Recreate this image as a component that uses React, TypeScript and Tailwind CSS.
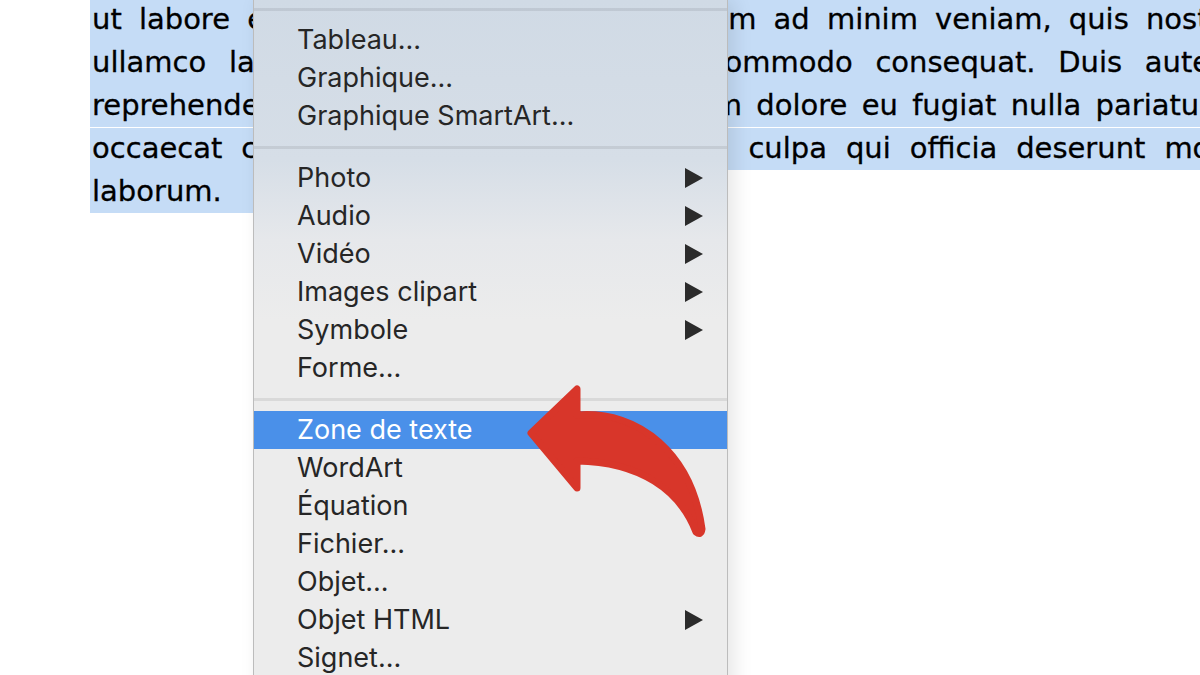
const lines = [
  "ut labore et dolore magna aliqua. Ut enim ad minim veniam, quis nostrud exercitation",
  "ullamco laboris nisi ut aliquip ex ea commodo consequat. Duis aute irure dolor in",
  "reprehenderit in voluptate velit esse cillum dolore eu fugiat nulla pariatur. Excepteur sint",
  "occaecat cupidatat non proident, sunt in culpa qui officia deserunt mollit anim id est",
];

type Entry = { label: string; sub?: boolean; active?: boolean } | "sep";

const menu: Entry[] = [
  { label: "Tableau..." },
  { label: "Graphique..." },
  { label: "Graphique SmartArt..." },
  "sep",
  { label: "Photo", sub: true },
  { label: "Audio", sub: true },
  { label: "Vidéo", sub: true },
  { label: "Images clipart", sub: true },
  { label: "Symbole", sub: true },
  { label: "Forme..." },
  "sep",
  { label: "Zone de texte", active: true },
  { label: "WordArt" },
  { label: "Équation" },
  { label: "Fichier..." },
  { label: "Objet..." },
  { label: "Objet HTML", sub: true },
  { label: "Signet..." },
];

function Caret() {
  return (
    <svg width="18" height="20" viewBox="0 0 18 20" className="shrink-0">
      <polygon points="0,0 18,10 0,20" fill="#2b2b2b" />
    </svg>
  );
}

function Separator({ className = "h-6 items-center" }: { className?: string }) {
  return (
    <div className={`flex ${className}`}>
      <div className="h-[3px] w-full bg-black/[0.08]" />
    </div>
  );
}

function Item({ label, sub, active }: { label: string; sub?: boolean; active?: boolean }) {
  return (
    <div
      className={`flex h-[38px] items-center justify-between pl-[43px] pr-6 ${
        active ? "bg-[#4a90e9] text-white" : "text-[#262626]"
      }`}
    >
      <span>{label}</span>
      {sub && <Caret />}
    </div>
  );
}

function Line({ text, className = "" }: { text: string; className?: string }) {
  return (
    <div className={`flex h-[43px] w-[1356px] items-center justify-between bg-[#c5dcf6] pl-0.5 ${className}`}>
      {text.split(" ").map((w, i) => (
        <span key={i}>{w}</span>
      ))}
    </div>
  );
}

function Arrow() {
  return (
    <svg className="pointer-events-none absolute inset-0" width="1200" height="675" viewBox="0 0 1200 675">
      <path
        d="M531 433 L577 389 L577 415 C640 410 692 455 702 529 Q701 536 696 532 C680 490 640 462 577 461 L577 488 Z"
        fill="#d8362a"
        stroke="#d8362a"
        strokeWidth="7"
        strokeLinejoin="round"
      />
    </svg>
  );
}

export default function App() {
  return (
    <div className="relative h-[675px] w-[1200px] overflow-hidden bg-white">
      <div className="-mt-0.5 pl-[90px] font-['DejaVu_Sans',sans-serif] text-[29px] text-black [-webkit-text-stroke:0.3px_#000]">
        <Line text={lines[0]} />
        <Line text={lines[1]} />
        <Line text={lines[2]} />
        <Line text={lines[3]} className="border-t border-white" />
        <div className="flex h-[43px] w-[170px] items-center bg-[#c5dcf6] pl-0.5">laborum.</div>
      </div>

      <div className="absolute left-[253px] top-0 h-[700px] w-[475px] border-x border-[#bcbcbc] bg-[linear-gradient(180deg,#d0dae5_0px,#d6dee7_160px,#e6e8eb_240px,#ececec_320px,#ececec_100%)] font-['Inter',sans-serif] text-[27px] shadow-[6px_0_18px_rgba(0,0,0,0.10)]">
        <Separator className="h-[21px] items-start pt-2" />
        {menu.map((e, i) =>
          e === "sep" ? <Separator key={i} /> : <Item key={i} label={e.label} sub={e.sub} active={e.active} />
        )}
      </div>

      <Arrow />
    </div>
  );
}
